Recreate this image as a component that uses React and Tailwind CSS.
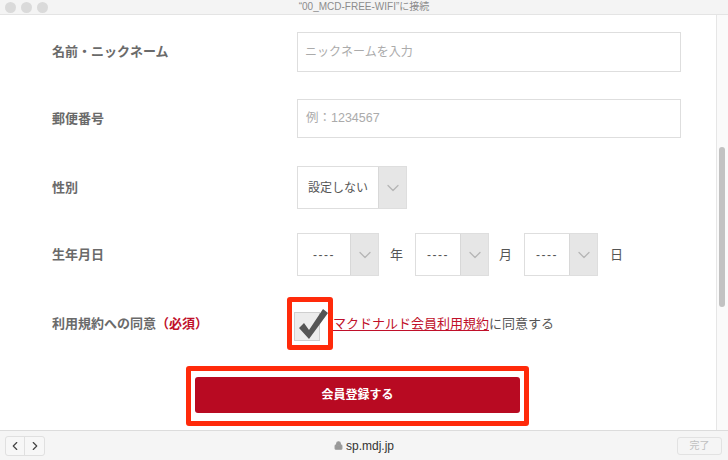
import { ChevronLeft, ChevronRight, ChevronDown, Lock } from 'lucide-react';

const font = "font-['Liberation_Sans','Noto_Sans_CJK_JP',sans-serif]";

function Select({ value, w, arrowW = 'w-[28px]', dash = false }) {
    return (
        <div className={`flex h-[43px] ${w} border border-[#dedede] bg-white`}>
            <div className={`flex-1 flex items-center justify-center text-[12px] text-[#555] ${dash ? 'tracking-[1.5px]' : ''}`}>{value}</div>
            <div className={`${arrowW} flex items-center justify-center bg-[#e6e6e6] border-l border-[#d8d8d8]`}>
                <ChevronDown size={20} strokeWidth={1.5} className="text-[#b5b5b5]" />
            </div>
        </div>
    );
}

function Row({ label, children, className = '' }) {
    return (
        <div className={`flex items-center ${className}`}>
            <div className="w-[297px] pl-[52px] text-[13px] font-bold text-[#6a6a6a]">{label}</div>
            {children}
        </div>
    );
}

export default function App() {
    return (
        <div className={`w-[728px] h-[460px] flex flex-col bg-white overflow-hidden ${font}`}>
            {/* title bar */}
            <div className="h-[15px] bg-[#f4f4f4] border-b border-[#e4e4e4] flex items-center relative">
                <div className="flex gap-[5px] pl-[5px]">
                    <div className="w-[11px] h-[11px] rounded-full bg-[#dadada]"></div>
                    <div className="w-[11px] h-[11px] rounded-full bg-[#dadada]"></div>
                    <div className="w-[11px] h-[11px] rounded-full bg-[#dadada]"></div>
                </div>
                <div className="absolute inset-0 flex items-center justify-center text-[10px] text-[#8c8c8c] leading-none">“00_MCD-FREE-WIFI”に接続</div>
            </div>

            {/* content */}
            <div className="flex-1 flex min-h-0">
                <div className="flex-1 flex flex-col">
                    <Row label="名前・ニックネーム" className="mt-[17px]">
                        <div className="w-[384px] h-[40px] border border-[#dedede] flex items-center pl-[7px] text-[12px] text-[#ababab]">ニックネームを入力</div>
                    </Row>
                    <Row label="郵便番号" className="mt-[27px]">
                        <div className="w-[384px] h-[39px] border border-[#dedede] flex items-center pl-[8px] text-[12.5px] text-[#ababab]">例：1234567</div>
                    </Row>
                    <Row label="性別" className="mt-[28px]">
                        <Select value="設定しない" w="w-[110px]" />
                    </Row>
                    <Row label="生年月日" className="mt-[24px]">
                        <div className="flex items-center text-[13px] text-[#555]">
                            <Select value="----" w="w-[82px]" dash />
                            <span className="ml-[11px] mr-[12px]">年</span>
                            <Select value="----" w="w-[74px]" dash />
                            <span className="ml-[10px] mr-[12px]">月</span>
                            <Select value="----" w="w-[74px]" dash />
                            <span className="ml-[12px]">日</span>
                        </div>
                    </Row>
                    <Row label={<>利用規約への同意<span className="text-[#c0102a]">（必須）</span></>} className="mt-[21px]">
                        <div className="flex items-center ml-[-10px]">
                            <div className="w-[46px] h-[53px] border-[5px] border-[#ff2a0a] rounded-[3px] flex items-center justify-center relative">
                                <div className="w-[26px] h-[29px] bg-[#ececec] border border-[#cfcfcf] mt-[6px] ml-[-6px]"></div>
                                <svg className="absolute left-[3px] top-[2px]" width="34" height="38" viewBox="0 0 34 38">
                                    <path d="M4 24 L9 19 L14 26 L28 5 L33 9 L14 35 Z" fill="#555" />
                                </svg>
                            </div>
                            <div className="text-[13px] text-[#555]">
                                <span className="text-[#c0102a] underline underline-offset-2">マクドナルド会員利用規約</span>に同意する
                            </div>
                        </div>
                    </Row>
                    <div className="flex justify-center mt-[16px]">
                        <div className="w-[343px] h-[60px] border-[5px] border-[#ff2a0a] rounded-[3px] px-[4px] pt-[6px] ml-[-1px]">
                            <div className="h-[36px] bg-[#b80a22] rounded-[3px] flex items-center justify-center text-white text-[12px] font-bold">会員登録する</div>
                        </div>
                    </div>
                </div>
                {/* scrollbar */}
                <div className="w-[12px] bg-[#fafafa] border-l border-[#e6e6e6] pt-[132px]">
                    <div className="w-[6px] h-[160px] ml-[2px] rounded-full bg-[#c2c2c2]"></div>
                </div>
            </div>

            {/* bottom bar */}
            <div className="h-[30px] bg-[#f5f5f5] border-t border-[#dcdcdc] flex items-center px-[5px] relative">
                <div className="flex border border-[#e0e0e0] rounded-[3px] bg-[#f7f7f7]">
                    <div className="w-[19px] h-[18px] flex items-center justify-center border-r border-[#e0e0e0]">
                        <ChevronLeft size={14} strokeWidth={2} className="text-[#444]" />
                    </div>
                    <div className="w-[19px] h-[18px] flex items-center justify-center">
                        <ChevronRight size={14} strokeWidth={2} className="text-[#444]" />
                    </div>
                </div>
                <div className="absolute inset-0 flex items-center justify-center gap-[3px] text-[12px] text-[#333]">
                    <Lock size={9} strokeWidth={3} className="text-[#999]" fill="#999" />
                    <span>sp.mdj.jp</span>
                </div>
                <div className="ml-auto mr-[1px] w-[45px] h-[18px] border border-[#e2e2e2] rounded-[3px] flex items-center justify-center text-[10px] text-[#c0c0c0]">完了</div>
            </div>
        </div>
    );
}
